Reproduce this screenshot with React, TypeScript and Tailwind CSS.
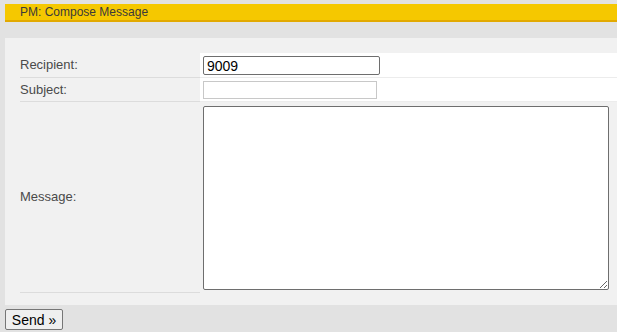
export default function App() {
  return (
    <div className="min-h-[332px] overflow-hidden bg-[#e2e2e2] pl-[5px] pt-1 font-['Liberation_Sans',Arial,sans-serif]">
      <div className="h-[18px] border-b-2 border-[#e2a900] bg-[#f5c800] pl-[15px] text-xs leading-[16px] text-[#3a3a3a]">
        PM: Compose Message
      </div>

      <div className="mt-4 bg-[#f1f1f1] pb-3 pl-[15px] pt-[15px]">
        <div className="flex h-[25px]">
          <div className="flex w-[180px] shrink-0 items-center border-b border-[#dcdcdc] text-[13px] text-[#4a4a4a]">
            Recipient:
          </div>
          <div className="flex flex-1 items-start border-b border-[#ececec] bg-white pl-[3px] pt-[3px]">
            <input
              type="text"
              defaultValue="9009"
              className="h-[19px] w-[177px] rounded-[2px] border border-[#6e6e6e] bg-white px-[3px] text-sm leading-none text-black outline-none"
            />
          </div>
        </div>

        <div className="flex h-[24px]">
          <div className="flex w-[180px] shrink-0 items-center border-b border-[#dcdcdc] text-[13px] text-[#4a4a4a]">
            Subject:
          </div>
          <div className="flex flex-1 items-start border-b border-[#ececec] bg-white pl-[3px] pt-[3px]">
            <input
              type="text"
              className="h-[18px] w-[174px] border border-[#c8c8c8] bg-white px-[3px] text-sm outline-none"
            />
          </div>
        </div>

        <div className="flex h-[191px]">
          <div className="flex w-[180px] shrink-0 items-center border-b border-[#dcdcdc] text-[13px] text-[#4a4a4a]">
            Message:
          </div>
          <div className="flex flex-1 items-start pl-[3px] pt-[4px]">
            <textarea className="h-[184px] w-[406px] rounded-[2px] border border-[#6e6e6e] bg-white text-sm outline-none"></textarea>
          </div>
        </div>
      </div>

      <button
        type="button"
        className="mt-1 h-[21px] w-[58px] rounded-[2px] border border-[#767676] bg-[#efefef] text-sm leading-none text-black"
      >
        Send »
      </button>
    </div>
  );
}
